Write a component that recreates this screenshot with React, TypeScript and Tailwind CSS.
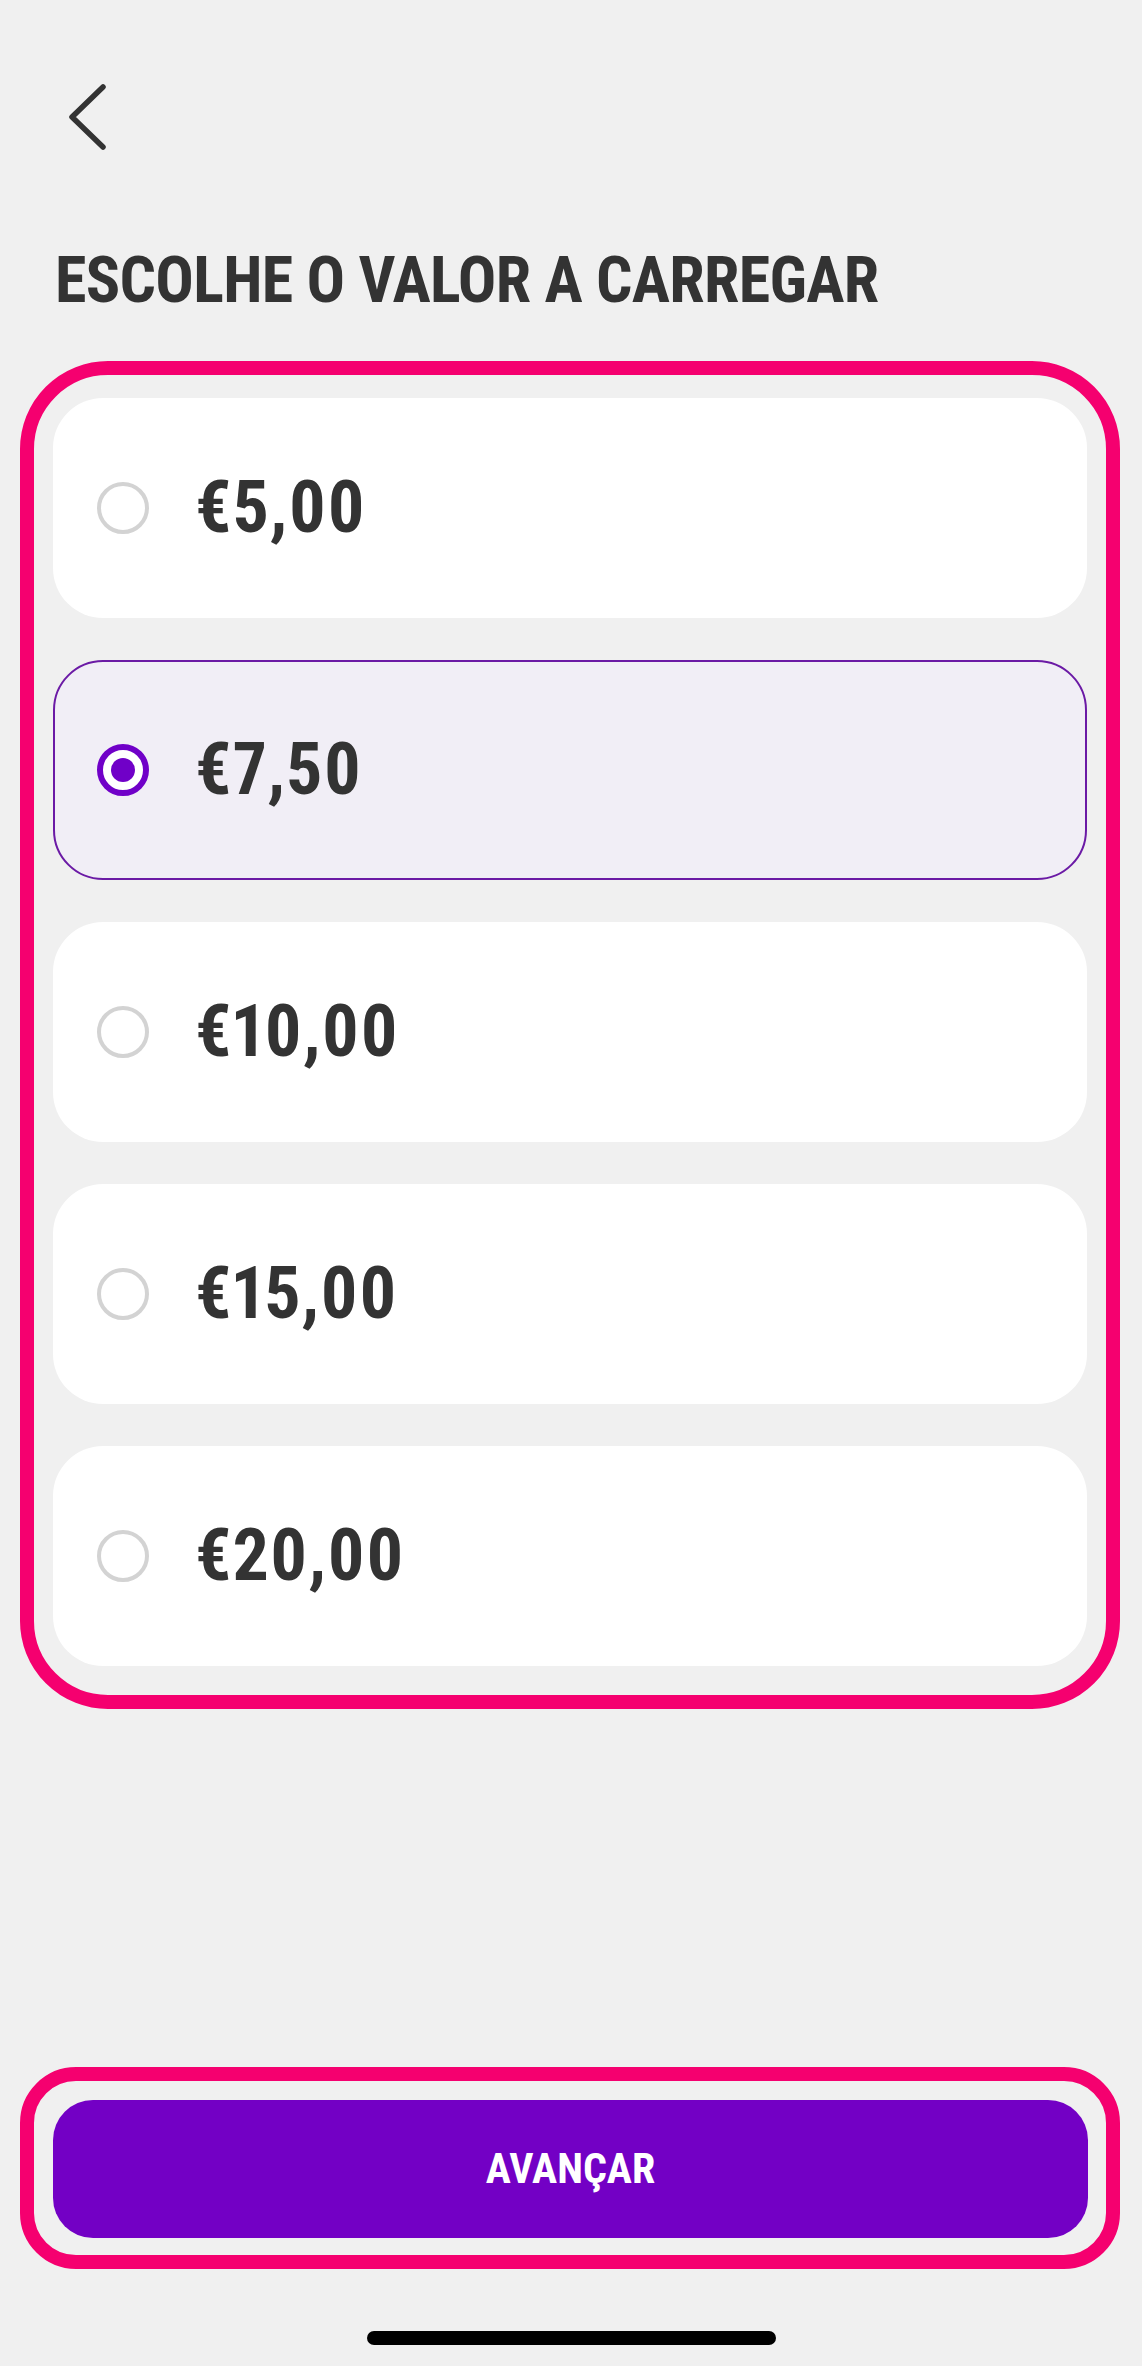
import React from "react";

const amounts = ["€5,00", "€7,50", "€10,00", "€15,00", "€20,00"];

function Radio({ selected }: { selected: boolean }) {
  if (selected) {
    return (
      <div className="flex h-[52px] w-[52px] shrink-0 items-center justify-center rounded-full border-[6px] border-[#7000c8] bg-white">
        <div className="h-[24px] w-[24px] rounded-full bg-[#7000c8]" />
      </div>
    );
  }
  return <div className="h-[52px] w-[52px] shrink-0 rounded-full border-[4px] border-[#d3d3d3] bg-white" />;
}

export default function App() {
  const selectedIndex = 1;
  return (
    <div className="flex min-h-[2366px] w-full flex-col bg-[#f0f0f0] font-['Roboto',sans-serif]">
      <div className="pl-[68px] pt-[84px]">
        <svg width="40" height="66" viewBox="0 0 40 66" fill="none">
          <polyline points="35,3 4,33 35,63" stroke="#333333" strokeWidth="5.5" strokeLinecap="round" strokeLinejoin="round" />
        </svg>
      </div>
      <h1 className="ml-[55px] mt-[99px] font-['Roboto',sans-serif] text-[64px] font-bold leading-none tracking-[-0.7px] text-[#333333] [font-stretch:75%]">
        ESCOLHE O VALOR A CARREGAR
      </h1>
      <div className="ml-[20px] mr-[22px] mt-[48px] rounded-[88px] border-[14px] border-[#f5006f] px-[19px] pb-[29px] pt-[23px]">
        <div className="flex flex-col gap-[42px]">
          {amounts.map((a, i) => {
            const sel = i === selectedIndex;
            return (
              <div
                key={a}
                className={
                  sel
                    ? "flex h-[220px] items-center gap-[46px] rounded-[50px] border-2 border-[#6b1aa5] bg-[#f1eef6] pl-[42px]"
                    : "flex h-[220px] items-center gap-[46px] rounded-[50px] bg-white pl-[44px]"
                }
              >
                <Radio selected={sel} />
                <span className="font-['Roboto',sans-serif] text-[72px] font-bold leading-none tracking-[1px] text-[#333333] proportional-nums [font-stretch:87%]">
                  {a}
                </span>
              </div>
            );
          })}
        </div>
      </div>
      <div className="ml-[20px] mr-[22px] mt-[358px] rounded-[56px] border-[14px] border-[#f5006f] pb-[17px] pl-[19px] pr-[18px] pt-[19px]">
        <button className="flex h-[138px] w-full items-center justify-center rounded-[40px] bg-[#7300c5] font-['Roboto',sans-serif] text-[42px] font-bold leading-none text-white [font-stretch:75%]">
          AVANÇAR
        </button>
      </div>
      <div className="mt-[62px] flex justify-center">
        <div className="h-[14px] w-[409px] rounded-full bg-black" />
      </div>
    </div>
  );
}
